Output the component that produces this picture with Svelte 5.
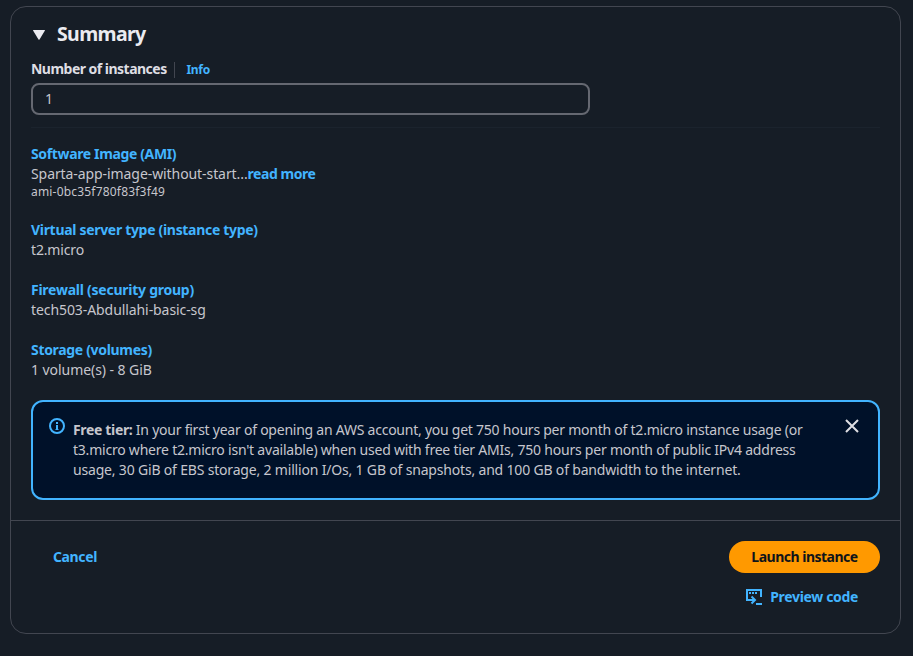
<script>
  const details = [
    { title: 'Virtual server type (instance type)', value: 't2.micro', name: 'server' },
    { title: 'Firewall (security group)', value: 'tech503-Abdullahi-basic-sg', name: 'firewall' },
    { title: 'Storage (volumes)', value: '1 volume(s) - 8 GiB', name: 'storage' }
  ];
  const tierLines = [
    "In your first year of opening an AWS account, you get 750 hours per month of t2.micro instance usage (or",
    "t3.micro where t2.micro isn't available) when used with free tier AMIs, 750 hours per month of public IPv4 address",
    "usage, 30 GiB of EBS storage, 2 million I/Os, 1 GB of snapshots, and 100 GB of bandwidth to the internet."
  ];
</script>

<main>
  <section class="panel">
    <div class="body">
      <header>
        <svg class="caret" width="12" height="10" viewBox="0 0 12 10"><path d="M.6 0h10.8c.5 0 .7.4.4.8L6.500 9.400c-.3.4-.7.4-1 0L.2.8C-.1.4.1 0 .6 0Z" fill="#ebebf0" /></svg>
        <h2>Summary</h2>
      </header>
      <div class="label">
        <label for="count">Number of instances</label>
        <a class="info" href="#info">Info</a>
      </div>
      <input id="count" value="1" />
      <hr />
      <div class="group">
        <a class="t-ami" href="#ami">Software Image (AMI)</a>
        <p><span class="v-ami">Sparta-app-image-without-start...</span><a class="more" href="#more">read more</a></p>
        <small>ami-0bc35f780f83f3f49</small>
      </div>
      {#each details as d}
        <div class="group {d.name}">
          <a href="#{d.name}">{d.title}</a>
          <p>{d.value}</p>
        </div>
      {/each}
      <div class="alert">
        <svg class="i" width="16" height="16" viewBox="0 0 16 16" fill="none" stroke="#42b4ff" stroke-width="2"><circle cx="8" cy="8" r="7" /><path d="M8 4v2M8 7v5" /><path d="M7 7.500h1M6.500 11.500h3" stroke-width="1" /></svg>
        <div class="tier">
          {#each tierLines as line, i}
            <div class="line l{i}">{#if i === 0}<b>Free tier:</b>{' '}{/if}{line}</div>
          {/each}
        </div>
        <button class="close" aria-label="Close"><svg width="16" height="16" viewBox="0 0 16 16" fill="none" stroke="#dedee3" stroke-width="2"><path d="m2 2 12 12M14 2 2 14" /></svg></button>
      </div>
    </div>
    <footer>
      <button class="cancel">Cancel</button>
      <div class="actions">
        <button class="launch">Launch instance</button>
        <button class="preview">
          <svg width="16" height="16" viewBox="0 0 16 16" fill="none" stroke="#42b4ff" stroke-width="2"><path d="M3 11H1V1h14v7M10 15h6M3 4h2M6 4h2M9 4h2M3 11h6M5.500 7.500 9 11l-3.500 3.500" /></svg>
          <span>Preview code</span>
        </button>
      </div>
    </footer>
  </section>
</main>

<style>
  :global(body) { margin: 0; background: #161d26; }
  main { box-sizing: border-box; width: 913px; height: 656px; padding: 6px 12px 0 10px; background: #161d26; color: #c6c6cd; font: 14px/20px "Noto Sans", "Open Sans", sans-serif; white-space: nowrap; }
  .panel { box-sizing: border-box; height: 628px; border: 1px solid #424650; border-radius: 16px; display: flex; flex-direction: column; }
  .body { box-sizing: border-box; height: 513px; padding: 16px 20px 0; }
  header { display: flex; align-items: center; height: 24px; gap: 12px; padding-left: 2px; }
  h2 { margin: 0 0 2px; font-size: 19.5px; line-height: 24px; letter-spacing: -.62px; color: #ebebf0; }
  a { color: #42b4ff; font-weight: 700; text-decoration: none; }
  .label { display: flex; align-items: center; height: 20px; margin-top: 13px; }
  label { width: 143px; margin-bottom: 2px; font-weight: 700; letter-spacing: -.52px; color: #dedee3; }
  .info { font-size: 12px; line-height: 16px; letter-spacing: -.3px; border-left: 1px solid #424650; padding-left: 11.5px; }
  input { display: block; box-sizing: border-box; width: 559px; height: 32px; margin-top: 3px; padding: 0 12px 1px; border: 2px solid #656871; border-radius: 8px; background: #161d26; color: #c6c6cd; font: inherit; }
  hr { height: 1px; margin: 12px 0 16px; border: 0; background: #1b232d; }
  .group { margin-bottom: 20px; }
  .group > a, p { display: block; height: 20px; margin: 0; }
  small { display: block; font-size: 12px; line-height: 16px; letter-spacing: .19px; }
  .t-ami { letter-spacing: -.36px; }
  .v-ami { letter-spacing: -.08px; }
  .more { letter-spacing: -.45px; }
  .server > a { letter-spacing: -.31px; }
  .server > p { letter-spacing: -.15px; }
  .firewall > a { letter-spacing: -.25px; }
  .firewall > p { letter-spacing: -.08px; }
  .storage > a { letter-spacing: -.32px; }
  .storage > p { letter-spacing: -.06px; }
  .alert { box-sizing: border-box; height: 100px; border: 2px solid #42b4ff; border-radius: 12px; background: #001129; display: flex; padding: 16px 18px 0 16px; }
  .i { flex: none; }
  .tier { flex: 1; margin: 2px 0 0 8px; }
  .line { height: 20px; }
  .l0 { letter-spacing: -.24px; }
  .l0 b { letter-spacing: -.34px; }
  .l1 { letter-spacing: -.22px; }
  .l2 { letter-spacing: -.18px; }
  button { border: 0; padding: 0; background: none; font: 700 14px/20px "Noto Sans", "Open Sans", sans-serif; color: #42b4ff; }
  .close { width: 16px; height: 16px; line-height: 0; }
  footer { border-top: 1px solid #424650; display: flex; justify-content: space-between; align-items: flex-start; padding: 20px 20px 0 42px; }
  .cancel { height: 32px; letter-spacing: -.38px; }
  .actions { display: flex; flex-direction: column; align-items: flex-end; gap: 8px; }
  .launch { width: 151px; height: 32px; border-radius: 16px; background: #ff9900; color: #0f141a; letter-spacing: -.5px; }
  .preview { display: flex; align-items: center; gap: 8px; height: 32px; margin-right: 22px; letter-spacing: -.34px; }
  svg { display: block; }
</style>
